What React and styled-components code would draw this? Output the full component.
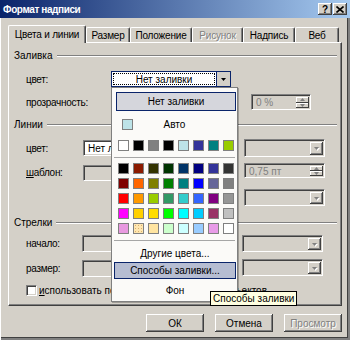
import React from 'react'
import styled, { createGlobalStyle } from 'styled-components'

const face = '#d4d0c8'
const shadow = '#808080'
const dark = '#404040'
const navy = '#0a246a'

const GlobalStyle = createGlobalStyle`
  html, body {
    margin: 0;
    padding: 0;
    background: ${face};
  }
  body {
    font-family: 'Liberation Sans', Arial, sans-serif;
    font-size: 10px;
    color: #000;
  }
`

const recent = ['#ffffff', '#000000', '#808080', '#000000', '#bde3e8', '#333399', '#008080', '#99cc00']

const palette = [
  ['#000000', '#8b1a00', '#333300', '#003300', '#003366', '#000080', '#333399', '#333333'],
  ['#800000', '#ff6600', '#808000', '#008000', '#008080', '#0000ff', '#666699', '#808080'],
  ['#ff0000', '#ff9900', '#99cc00', '#339966', '#33cccc', '#3366ff', '#800080', '#969696'],
  ['#ff00ff', 'dots1', '#ffdd00', '#00ff00', '#00ffff', '#00ccff', '#993366', '#c0c0c0'],
  ['#e899e0', 'dots2', '#ffe4a0', '#ccffcc', '#ccffff', '#99ccff', '#e89be8', '#ffffff'],
]

const tabs = [
  { label: 'Цвета и линии', w: 78, active: true },
  { label: 'Размер', w: 44 },
  { label: 'Положение', w: 62 },
  { label: 'Рисунок', w: 51, disabled: true },
  { label: 'Надпись', w: 52 },
  { label: 'Веб', w: 44 },
]

const Arrow = ({ disabled }) => (
  <ArrowSvg width="7" height="5" viewBox="0 0 7 5" $disabled={disabled}>
    <path d="M1 1h5L3.5 4z" fill={disabled ? shadow : '#000'} />
  </ArrowSvg>
)

const SpinArrow = ({ up }) => (
  <svg width="5" height="3" viewBox="0 0 5 3">
    <path d={up ? 'M0 3h5L2.5 0z' : 'M0 0h5L2.5 3z'} fill={shadow} />
  </svg>
)

function Combo({ w, h = 16, white, text, align }) {
  return (
    <ComboBox $w={w} $h={h} $white={white} $align={align}>
      <ComboText>{text}</ComboText>
      <DropButton>
        <Arrow disabled={!white} />
      </DropButton>
    </ComboBox>
  )
}

function Spinner({ w, h = 16, text, mr, align }) {
  return (
    <SpinBox $w={w} $h={h} $mr={mr} $align={align}>
      <SpinText>{text}</SpinText>
      <SpinButtons>
        <SpinButton>
          <SpinArrow up />
        </SpinButton>
        <SpinButton>
          <SpinArrow />
        </SpinButton>
      </SpinButtons>
    </SpinBox>
  )
}

export default function App() {
  return (
    <>
      <GlobalStyle />
      <Window>
        <TitleBar>
          <TitleText>Формат надписи</TitleText>
          <CaptionButtons>
            <CaptionButton>?</CaptionButton>
            <CaptionButton>
              <svg width="8" height="7" viewBox="0 0 8 7">
                <path d="M0.5 0.5l7 6M7.5 0.5l-7 6" stroke="#000" strokeWidth="1.6" />
              </svg>
            </CaptionButton>
          </CaptionButtons>
        </TitleBar>

        <Body>
          <TabStrip>
            {tabs.map(t => (
              <Tab key={t.label} $w={t.w} $active={t.active} $disabled={t.disabled}>
                {t.label}
              </Tab>
            ))}
          </TabStrip>

          <Panel>
            <GroupHeader $mt={6}>
              <span>Заливка</span>
              <Etched />
            </GroupHeader>
            <Row $h={16} $mt={9}>
              <Label $w={85}>цвет:</Label>
              <FillCombo>
                <FillText>
                  <FocusRect>Нет заливки</FocusRect>
                </FillText>
                <FillArrow>
                  <Arrow />
                </FillArrow>
              </FillCombo>
            </Row>
            <Row $h={16} $mt={7}>
              <Label $w={85}>прозрачность:</Label>
              <Spinner w={60} text="0 %" mr={30} />
            </Row>

            <GroupHeader $mt={8}>
              <span>Линии</span>
              <Etched />
            </GroupHeader>
            <Row $h={18} $mt={8}>
              <Label $w={57}>цвет:</Label>
              <Combo w={100} white text="Нет линий" />
              <RightSlot $mr={16}>
                <Combo w={81} h={18} />
              </RightSlot>
            </Row>
            <Row $h={18} $mt={6}>
              <Label $w={57}>
                <u>ш</u>аблон:
              </Label>
              <Combo w={100} align="flex-end" />
              <RightSlot $mr={16} $align="flex-start">
                <Spinner w={81} h={15} text="0,75 пт" />
              </RightSlot>
            </Row>
            <Row $h={17} $mt={8}>
              <RightSlot $mr={16}>
                <Combo w={81} h={17} />
              </RightSlot>
            </Row>

            <GroupHeader $mt={10}>
              <span>Стрелки</span>
              <Etched />
            </GroupHeader>
            <Row $h={17} $mt={6}>
              <Label $w={56}>начало:</Label>
              <Combo w={100} h={17} />
              <RightSlot $mr={18}>
                <Combo w={81} h={17} />
              </RightSlot>
            </Row>
            <Row $h={18} $mt={7}>
              <Label $w={56}>размер:</Label>
              <Combo w={100} h={17} align="flex-end" />
              <RightSlot $mr={18} $align="flex-start">
                <Combo w={81} h={17} />
              </RightSlot>
            </Row>
            <Row $h={12} $mt={7}>
              <CheckBox />
              <CheckLabel>
                <u>и</u>спользовать по умолчанию для новых объектов
              </CheckLabel>
            </Row>
          </Panel>

          <ButtonRow>
            <PushButton>ОК</PushButton>
            <PushButton>Отмена</PushButton>
            <PushButton $disabled>Просмотр</PushButton>
          </ButtonRow>
        </Body>

        <Popup>
          <NoFill>Нет заливки</NoFill>
          <AutoRow>
            <Swatch $c="#bde3e8" />
            <AutoText>Авто</AutoText>
          </AutoRow>
          <SwatchRow $mt={8}>
            {recent.map((c, i) => (
              <Swatch key={i} $c={c} />
            ))}
          </SwatchRow>
          <Separator $mt={6} />
          <SwatchGrid>
            {palette.flat().map((c, i) => (
              <Swatch key={i} $c={c} />
            ))}
          </SwatchGrid>
          <Separator $mt={6} />
          <MenuItem $mt={4}>Другие цвета...</MenuItem>
          <MenuItem $hover>Способы заливки...</MenuItem>
          <MenuItem $mt={3}>Фон</MenuItem>
        </Popup>

        <Tooltip>Способы заливки</Tooltip>
      </Window>
    </>
  )
}

const Window = styled.div`
  position: relative;
  width: 350px;
  height: 340px;
  box-sizing: border-box;
  background: ${face};
  display: flex;
  flex-direction: column;
  overflow: hidden;
  box-shadow: inset 1px 0 #fff, inset -2px -2px ${shadow}, inset -3px -3px ${dark};
`

const TitleBar = styled.div`
  flex: none;
  height: 18px;
  display: flex;
  align-items: center;
  padding: 0 3px;
  background: linear-gradient(to right, ${navy}, #a6caf0);
`

const TitleText = styled.div`
  color: #fff;
  font-weight: bold;
  font-size: 10px;
  letter-spacing: -0.4px;
`

const CaptionButtons = styled.div`
  margin-left: auto;
  display: flex;
  gap: 1px;
`

const CaptionButton = styled.div`
  box-sizing: border-box;
  width: 14px;
  height: 12px;
  display: flex;
  align-items: center;
  justify-content: center;
  background: ${face};
  font-weight: bold;
  font-size: 10px;
  box-shadow: inset -1px -1px ${dark}, inset 1px 1px #fff, inset -2px -2px ${shadow};
`

const Body = styled.div`
  padding: 7px 8px 0 8px;
  display: flex;
  flex-direction: column;
`

const TabStrip = styled.div`
  display: flex;
  align-items: flex-end;
  height: 17px;
`

const Tab = styled.div`
  position: relative;
  z-index: ${p => (p.$active ? 1 : 0)};
  box-sizing: border-box;
  flex: none;
  width: ${p => p.$w}px;
  height: ${p => (p.$active ? 18 : 15)}px;
  margin-bottom: ${p => (p.$active ? -1 : 0)}px;
  padding-bottom: ${p => (p.$active ? 1 : 0)}px;
  display: flex;
  align-items: center;
  justify-content: center;
  background: ${face};
  border-top: 1px solid #fff;
  border-left: 1px solid #fff;
  border-right: 1px solid ${dark};
  box-shadow: inset -1px 0 ${shadow};
  border-radius: 2px 2px 0 0;
  white-space: nowrap;
  letter-spacing: -0.2px;
  color: ${p => (p.$disabled ? shadow : '#000')};
  text-shadow: ${p => (p.$disabled ? '1px 1px #fff' : 'none')};
`

const Panel = styled.div`
  box-sizing: border-box;
  width: 334px;
  height: 264px;
  display: flex;
  flex-direction: column;
  border-top: 1px solid #fff;
  border-left: 1px solid #fff;
  border-right: 1px solid ${dark};
  border-bottom: 1px solid ${dark};
  box-shadow: inset -1px -1px ${shadow};
`

const GroupHeader = styled.div`
  display: flex;
  align-items: center;
  height: 13px;
  margin-top: ${p => p.$mt}px;
  padding: 0 4px 0 5px;
`

const Etched = styled.div`
  flex: 1;
  height: 0;
  margin-left: 4px;
  border-top: 1px solid ${shadow};
  border-bottom: 1px solid #fff;
`

const Row = styled.div`
  display: flex;
  align-items: center;
  height: ${p => p.$h}px;
  margin-top: ${p => p.$mt}px;
  padding-left: 17px;
`

const Label = styled.div`
  flex: none;
  width: ${p => p.$w}px;
  white-space: nowrap;
  letter-spacing: -0.3px;
`

const RightSlot = styled.div`
  margin-left: auto;
  margin-right: ${p => p.$mr}px;
  align-self: ${p => p.$align || 'center'};
  display: flex;
`

const sunken = `
  border-top: 1px solid ${shadow};
  border-left: 1px solid ${shadow};
  border-right: 1px solid #fff;
  border-bottom: 1px solid #fff;
  box-shadow: inset 1px 1px ${dark}, inset -1px -1px ${face};
`

const ComboBox = styled.div`
  box-sizing: border-box;
  flex: none;
  width: ${p => p.$w}px;
  height: ${p => p.$h}px;
  align-self: ${p => p.$align || 'center'};
  display: flex;
  padding: 2px 1px 1px 2px;
  background: ${p => (p.$white ? '#fff' : face)};
  ${sunken}
`

const ComboText = styled.div`
  flex: 1;
  padding-left: 2px;
  display: flex;
  align-items: center;
  white-space: nowrap;
  overflow: hidden;
`

const DropButton = styled.div`
  box-sizing: border-box;
  width: 13px;
  display: flex;
  align-items: center;
  justify-content: center;
  background: ${face};
  box-shadow: inset -1px -1px ${dark}, inset 1px 1px #fff, inset -2px -2px ${shadow};
`

const ArrowSvg = styled.svg`
  filter: ${p => (p.$disabled ? 'drop-shadow(1px 1px 0 #fff)' : 'none')};
`

const SpinBox = styled.div`
  box-sizing: border-box;
  flex: none;
  width: ${p => p.$w}px;
  height: ${p => p.$h}px;
  margin-left: ${p => (p.$mr !== undefined ? 'auto' : 0)};
  margin-right: ${p => p.$mr || 0}px;
  display: flex;
  padding: 2px 1px 1px 2px;
  background: ${face};
  ${sunken}
`

const SpinText = styled.div`
  flex: 1;
  display: flex;
  align-items: center;
  padding-left: 2px;
  color: ${shadow};
  white-space: nowrap;
`

const SpinButtons = styled.div`
  width: 13px;
  display: flex;
  flex-direction: column;
`

const SpinButton = styled.div`
  flex: 1;
  display: flex;
  align-items: center;
  justify-content: center;
  background: ${face};
  box-shadow: inset -1px -1px ${dark}, inset 1px 1px #fff;
`

const FillCombo = styled.div`
  box-sizing: border-box;
  width: 120px;
  height: 16px;
  display: flex;
  border: 1px solid ${navy};
  background: ${face};
`

const FillText = styled.div`
  flex: 1;
  background: #fff;
  padding: 1px;
  display: flex;
  border-right: 1px solid ${navy};
`

const FocusRect = styled.div`
  flex: 1;
  display: flex;
  align-items: center;
  justify-content: center;
  outline: 1px dotted #000;
  outline-offset: -1px;
  white-space: nowrap;
`

const FillArrow = styled.div`
  width: 13px;
  display: flex;
  align-items: center;
  justify-content: center;
`

const CheckBox = styled.div`
  box-sizing: border-box;
  width: 11px;
  height: 11px;
  background: #fff;
  ${sunken}
`

const CheckLabel = styled.div`
  margin-left: 2px;
  white-space: nowrap;
`

const ButtonRow = styled.div`
  display: flex;
  justify-content: flex-end;
  gap: 11px;
  margin-top: 8px;
`

const PushButton = styled.div`
  box-sizing: border-box;
  width: 58px;
  height: 18px;
  display: flex;
  align-items: center;
  justify-content: center;
  background: ${face};
  box-shadow: inset -1px -1px ${dark}, inset 1px 1px #fff, inset -2px -2px ${shadow};
  color: ${p => (p.$disabled ? shadow : '#000')};
  text-shadow: ${p => (p.$disabled ? '1px 1px #fff' : 'none')};
`

const Popup = styled.div`
  position: absolute;
  left: 111px;
  top: 87px;
  width: 127px;
  height: 215px;
  box-sizing: border-box;
  z-index: 5;
  background: #fbfaf8;
  border: 1px solid #7f7f7f;
  box-shadow: 1px 1px 0 rgba(0, 0, 0, 0.25);
  display: flex;
  flex-direction: column;
  padding: 0 1px;
`

const NoFill = styled.div`
  box-sizing: border-box;
  height: 19px;
  margin: 4px 0 0 3px;
  display: flex;
  align-items: center;
  justify-content: center;
  background: #d5d6dc;
  border: 1px solid ${navy};
`

const AutoRow = styled.div`
  display: flex;
  align-items: center;
  height: 15px;
  margin-top: 6px;
  padding-left: 9px;
`

const AutoText = styled.div`
  flex: 1;
  text-align: center;
  padding-right: 20px;
`

const SwatchRow = styled.div`
  display: flex;
  gap: 4px;
  margin-top: ${p => p.$mt}px;
  padding-left: 5px;
`

const SwatchGrid = styled.div`
  display: grid;
  grid-template-columns: repeat(8, 11px);
  grid-auto-rows: 11px;
  gap: 4px;
  margin-top: 5px;
  padding-left: 5px;
`

const swatchFill = c => {
  if (c === 'dots1')
    return `background: #ffd000 radial-gradient(circle, #ff8a00 45%, transparent 50%) 0 0 / 2px 2px;`
  if (c === 'dots2')
    return `background: #ffe6b0 radial-gradient(circle, #d8b070 40%, transparent 45%) 0 0 / 3px 3px;`
  return `background: ${c};`
}

const Swatch = styled.div`
  box-sizing: border-box;
  flex: none;
  width: 11px;
  height: 11px;
  border: 1px solid ${shadow};
  ${p => swatchFill(p.$c)}
`

const Separator = styled.div`
  height: 1px;
  margin: ${p => p.$mt}px 1px 0 1px;
  background: #a6a6a6;
`

const MenuItem = styled.div`
  box-sizing: border-box;
  height: 17px;
  margin: ${p => p.$mt || 0}px 0 0 1px;
  display: flex;
  align-items: center;
  justify-content: center;
  background: ${p => (p.$hover ? '#b6bdd2' : 'transparent')};
  border: 1px solid ${p => (p.$hover ? navy : 'transparent')};
`

const Tooltip = styled.div`
  position: absolute;
  left: 210px;
  top: 291px;
  z-index: 6;
  box-sizing: border-box;
  height: 15px;
  padding: 0 2px;
  display: flex;
  align-items: center;
  background: #ffffe1;
  border: 1px solid #000;
  white-space: nowrap;
`
